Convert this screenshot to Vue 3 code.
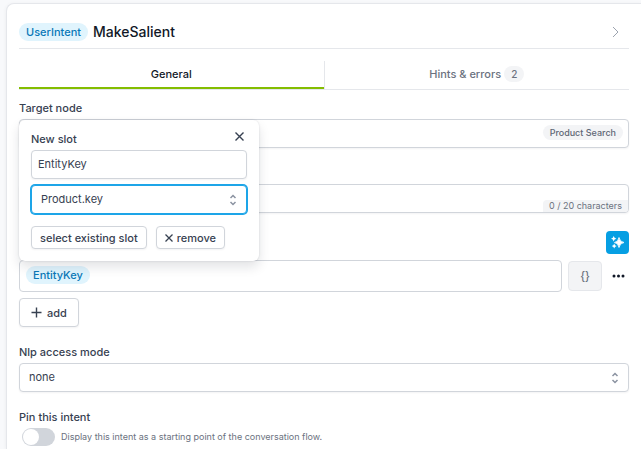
<script setup>
import { ref } from 'vue'

const activeTab = ref('general')
const targetNode = ref('')
const description = ref('')
const slotName = ref('EntityKey')
const slotType = ref('Product.key')
const accessMode = ref('none')
const pinned = ref(false)
</script>

<template>
  <div class="page">
    <main class="card">
      <header class="header">
        <span class="pill">UserIntent</span>
        <h1 class="title">MakeSalient</h1>
        <button class="plain collapse" type="button" aria-label="Collapse">
          <svg width="7" height="12" viewBox="0 0 7 12"><path d="M1 1l5 5-5 5" /></svg>
        </button>
      </header>

      <nav class="tabs" role="tablist">
        <button class="tab" :class="{ active: activeTab === 'general' }" type="button" role="tab" @click="activeTab = 'general'">General</button>
        <button class="tab" :class="{ active: activeTab === 'hints' }" type="button" role="tab" @click="activeTab = 'hints'">
          Hints &amp; errors <span class="count">2</span>
        </button>
      </nav>

      <section class="field">
        <label class="label" for="target">Target node</label>
        <div class="control">
          <input id="target" v-model="targetNode" class="input" type="text" />
          <span class="tag">Product Search</span>
        </div>
      </section>

      <section class="field description">
        <div class="control">
          <input v-model="description" class="input" type="text" aria-label="Description" />
          <span class="counter">{{ description.length }} / 20 characters</span>
        </div>
      </section>

      <div class="assist">
        <button class="spark" type="button" aria-label="Generate examples">
          <svg width="13" height="13" viewBox="0 0 13 13">
            <path d="M8 1.500Q8.700 5.800 13 6.500 8.700 7.200 8 11.500 7.300 7.200 3.500 6.500 7.300 5.800 8 1.500z" stroke-width="0.8" />
            <path d="M2.700 0l.9 1.800 1.800.9-1.800.9-.9 1.800-.9-1.800L0 2.700l1.800-.9z" />
            <path d="M3.200 7.600l.8 1.700 1.700.8-1.700.8-.8 1.700-.8-1.700-1.700-.8 1.700-.8z" />
          </svg>
        </button>
      </div>

      <div class="example">
        <div class="phrase">
          <button class="pill slot" type="button">EntityKey</button>
          <form class="popover" aria-label="New slot" @submit.prevent>
            <div class="popover-head">
              <label class="label" for="slot-name">New slot</label>
              <button class="plain" type="button" aria-label="Close">
                <svg width="9" height="9" viewBox="0 0 9 9" stroke-width="1.4"><path d="M.5.5l8 8M8.500.5l-8 8" /></svg>
              </button>
            </div>
            <input id="slot-name" v-model="slotName" class="input" type="text" />
            <div class="control">
              <select v-model="slotType" class="input select focused" aria-label="Slot type">
                <option>Product.key</option>
              </select>
              <svg class="chevrons" width="8" height="12" viewBox="0 0 8 12"><path d="M1.500 4L4 1.500 6.500 4M1.500 8L4 10.500 6.500 8" /></svg>
            </div>
            <div class="actions">
              <button class="button small" type="button">select existing slot</button>
              <button class="button small" type="button">
                <svg width="8" height="8" viewBox="0 0 8 8" stroke-width="1.3"><path d="M.5.5l7 7M7.500.5l-7 7" /></svg>
                remove
              </button>
            </div>
          </form>
        </div>
        <button class="braces" type="button" aria-label="Insert variable">{}</button>
        <button class="plain more" type="button" aria-label="More options">
          <svg width="13" height="4" viewBox="0 0 13 4"><circle cx="2" cy="2" r="1.5" /><circle cx="6.5" cy="2" r="1.5" /><circle cx="11" cy="2" r="1.5" /></svg>
        </button>
      </div>

      <button class="button add" type="button">
        <svg width="11" height="11" viewBox="0 0 11 11" stroke-width="1.4"><path d="M5.500.5v10M.5 5.500h10" /></svg>
        add
      </button>

      <section class="field mode">
        <label class="label" for="mode">Nlp access mode</label>
        <div class="control">
          <select id="mode" v-model="accessMode" class="input select">
            <option>none</option>
          </select>
          <svg class="chevrons" width="8" height="12" viewBox="0 0 8 12"><path d="M1.500 4L4 1.500 6.500 4M1.500 8L4 10.500 6.500 8" /></svg>
        </div>
      </section>

      <section class="field pin">
        <label class="label" for="pin">Pin this intent</label>
        <div class="toggle-row">
          <input id="pin" v-model="pinned" class="toggle" type="checkbox" role="switch" />
          <span class="hint">Display this intent as a starting point of the conversation flow.</span>
        </div>
      </section>
    </main>
  </div>
</template>

<style>
body {
  background: #f8f9fb;
}
</style>

<style scoped>
.page,
.page * {
  box-sizing: border-box;
}

.page {
  display: flex;
  min-height: 100vh;
  padding: 3px 0 0 6px;
  font-family: Inter, "Liberation Sans", sans-serif;
  font-size: 11px;
  line-height: 16px;
  color: #374151;
}

button,
input,
select {
  margin: 0;
  font: inherit;
  color: inherit;
}

button {
  cursor: pointer;
}

svg {
  display: block;
  flex: none;
  fill: none;
  stroke: currentColor;
}

.card {
  flex: 1;
  min-width: 0;
  padding: 12px 12px 2px;
  border: 1px solid #e5e7eb;
  border-width: 1px 0 0 1px;
  border-radius: 8px 0 0 0;
  background: #fff;
  box-shadow: 0 1px 4px rgba(15, 23, 42, 0.06);
}

.header {
  display: flex;
  align-items: center;
  gap: 5px;
  height: 33px;
  border-bottom: 1px solid #e5e7eb;
}

.pill {
  padding: 1px 7px;
  border: 0;
  border-radius: 9px;
  background: #e0f4fd;
  font-weight: 500;
  color: #0a78b8;
}

.title {
  flex: 1;
  margin: 0;
  font-size: 14px;
  font-weight: 500;
  color: #111827;
}

.plain {
  display: flex;
  padding: 0;
  border: 0;
  background: none;
}

.collapse {
  padding-right: 10px;
  color: #9ca3af;
}

.tabs {
  display: flex;
  height: 29px;
  margin-top: 12px;
  border-bottom: 1px solid #e5e7eb;
}

.tab {
  display: flex;
  flex: 1;
  align-items: center;
  justify-content: center;
  gap: 3px;
  padding: 0 0 2px;
  border: 0;
  background: none;
  font-weight: 500;
  color: #6b7280;
}

.tab + .tab {
  border-left: 1px solid #e5e7eb;
}

.tab.active {
  color: #111827;
  box-shadow: inset 0 -2px #84bd00;
}

.count {
  padding: 0 7px;
  border-radius: 8px;
  background: #f3f4f6;
  font-size: 10px;
}

.field {
  margin-top: 10px;
}

.label {
  display: block;
  margin-bottom: 3px;
  font-weight: 500;
}

.control {
  position: relative;
}

.input {
  display: block;
  width: 100%;
  height: 29px;
  padding: 0 6px 1px;
  border: 1px solid #d1d5db;
  border-radius: 4px;
  outline: none;
  background: #fff;
  box-shadow: 0 1px 2px rgba(15, 23, 42, 0.05);
}

.select {
  appearance: none;
  padding: 0 9px 1px;
}

.select.focused {
  border-color: #1da5e8;
  box-shadow: 0 0 0 1px #1da5e8;
}

.chevrons {
  position: absolute;
  top: 9px;
  right: 10px;
  color: #8b93a1;
  stroke-width: 1.5;
  pointer-events: none;
}

.tag {
  position: absolute;
  top: 6px;
  right: 6px;
  padding: 0 7px;
  border-radius: 8px;
  background: #f3f4f6;
  font-size: 9px;
  line-height: 15px;
  font-weight: 500;
  color: #5f6775;
}

.description {
  margin-top: 36px;
}

.counter {
  position: absolute;
  right: 1px;
  bottom: 1px;
  padding: 0 6px;
  border-radius: 4px 0 3px;
  background: #f3f4f6;
  font-size: 9px;
  line-height: 12px;
  color: #6b7280;
}

.assist {
  display: flex;
  justify-content: flex-end;
  margin-top: 18px;
}

.spark {
  display: flex;
  align-items: center;
  justify-content: center;
  width: 23px;
  height: 23px;
  padding: 0;
  border: 0;
  border-radius: 4px;
  background: #069fe3;
  color: #fff;
}

.spark svg {
  fill: currentColor;
  stroke-width: 0;
}

.example {
  display: flex;
  align-items: center;
  gap: 6px;
  margin-top: 6px;
}

.phrase {
  position: relative;
  display: flex;
  flex: 1;
  align-items: center;
  height: 32px;
  padding: 0 6px;
  border: 1px solid #d1d5db;
  border-radius: 4px;
}

.slot {
  margin-bottom: 2px;
}

.braces {
  width: 34px;
  height: 30px;
  padding: 0 0 1px;
  border: 1px solid #e5e7eb;
  border-radius: 4px;
  background: #f3f4f6;
  font-weight: 500;
  color: #6b7280;
}

.more {
  justify-content: center;
  width: 21px;
  color: #111827;
}

.more svg {
  fill: currentColor;
  stroke: none;
}

.popover {
  position: absolute;
  z-index: 1;
  bottom: 100%;
  left: -1px;
  display: grid;
  gap: 6px;
  width: 240px;
  padding: 8px 12px 12px;
  border-radius: 6px;
  background: #fff;
  box-shadow: 0 0 2px rgba(15, 23, 42, 0.15), 0 6px 12px rgba(15, 23, 42, 0.12);
}

.popover-head {
  display: flex;
  align-items: center;
  justify-content: space-between;
  height: 16px;
  padding-right: 3px;
}

.popover-head .label {
  margin: 5px 0 0;
}

.actions {
  display: flex;
  gap: 9px;
  margin-top: 6px;
}

.button {
  display: flex;
  align-items: center;
  gap: 5px;
  height: 29px;
  padding: 0 11px;
  border: 1px solid #d1d5db;
  border-radius: 4px;
  background: #fff;
  box-shadow: 0 1px 2px rgba(15, 23, 42, 0.05);
  font-weight: 500;
}

.small {
  gap: 4px;
  height: 23px;
  padding: 0 8px;
}

.add {
  margin-top: 6px;
}

.mode {
  margin-top: 17px;
}

.pin {
  margin-top: 17px;
}

.toggle-row {
  display: flex;
  align-items: center;
  gap: 6px;
  padding-left: 3px;
}

.toggle {
  appearance: none;
  flex: none;
  width: 33px;
  height: 18px;
  padding: 1px;
  border-radius: 9px;
  background: #d1d5db;
}

.toggle::before {
  content: "";
  display: block;
  width: 16px;
  height: 16px;
  border-radius: 8px;
  background: #fff;
}

.toggle:checked {
  background: #84bd00;
}

.toggle:checked::before {
  margin-left: auto;
}

.hint {
  font-size: 9px;
  color: #6b7280;
}
</style>
